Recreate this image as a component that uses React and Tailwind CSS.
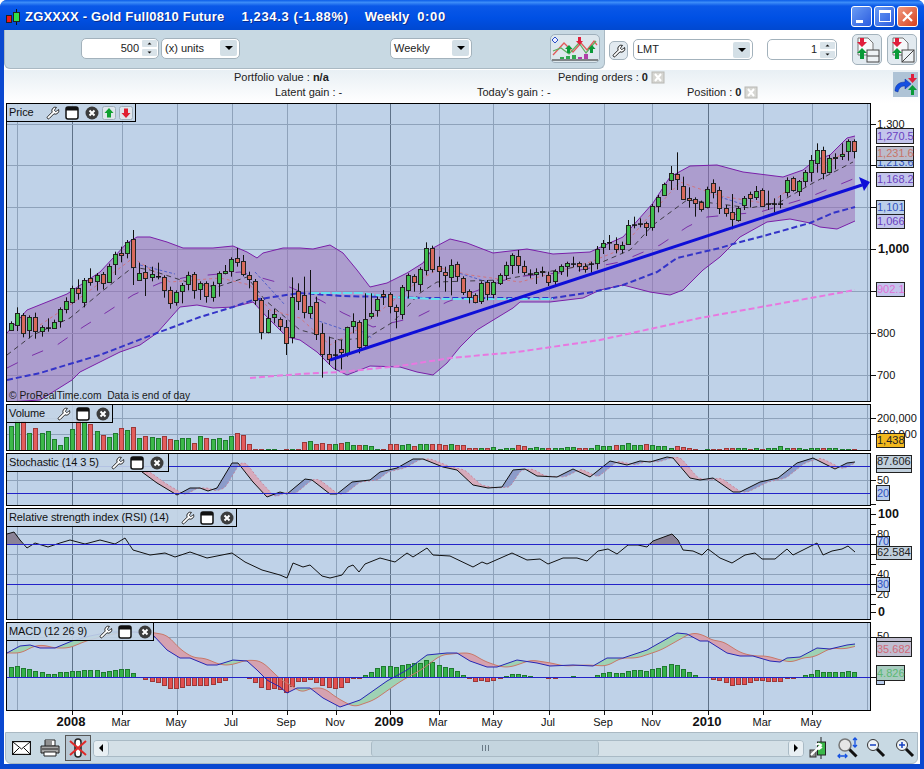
import React from 'react';
import { Wrench } from 'lucide-react';

const seg = (ox, oy, rows) => rows.map(([x, t, b, c, wt, wb]) => ({
    x: ox + x / 3, top: oy + t / 3, bot: oy + b / 3, c,
    wt: wt === undefined ? null : oy + wt / 3,
    wb: wb === undefined ? null : oy + wb / 3,
}));

// candle bodies read off the chart, split in four stretches
const candles = [
    ...seg(0, 220, [[34,310,330,'g'],[52,280,315,'g',262],[70,285,340,'r'],[88,292,330,'g',undefined,355],[106,292,335,'r',278],[127,322,335,'g'],[145,322,326,'d',295],[163,305,322,'g'],[181,268,305,'g'],[199,243,268,'g',232],[217,203,245,'g'],[235,203,218,'r',178],[253,180,245,'g',undefined,262],[271,175,188,'r',145],[292,165,182,'g',undefined,212],[310,162,190,'r'],[328,137,185,'g',undefined,165],[346,103,133,'g',95,165],[364,100,106,'r',80],[382,67,100,'g',60],[400,57,142,'r',30,195],[418,160,180,'g',128],[436,157,175,'r',135,228],[457,163,172,'g',140],[475,168,172,'d',128],[493,172,212,'r'],[511,210,250,'r',200,266],[529,217,248,'g'],[547,195,214,'g',undefined,250],[565,165,193,'g',155],[583,162,210,'r',undefined,236],[601,190,208,'g',undefined,240],[619,190,230,'r',undefined,248],[640,195,230,'g',185],[658,160,190,'g',undefined,230],[676,153,160,'g',135],[694,118,155,'g',undefined,170],[712,115,128,'r',84],[730,124,163,'r',105],[748,165,178,'r',155,205],[766,183,240,'r'],[784,240,337,'r',undefined,358],[805,295,337,'g',270],[823,283,292,'g',266],[841,298,320,'r'],[859,320,367,'r',300,405],[877,232,353,'g',172,370],[895,214,245,'r',190,270]]),
    ...seg(300, 230, [[13,195,247,'r',140,265],[31,227,247,'g',120,265],[49,217,313,'r',200,330],[67,310,373,'r',280,443],[88,373,388,'r',320,405],[106,373,376,'d',330,420],[124,358,368,'r',330,418],[142,292,370,'g',290,380],[160,274,290,'g',250,310],[178,277,352,'r',undefined,370],[196,268,347,'g',190,350],[214,250,260,'g',190],[232,208,241,'g',200,260],[250,193,200,'r',180,225],[271,193,230,'r',undefined,250],[289,230,241,'r',undefined,295],[307,172,254,'g',165,268],[325,136,182,'g',undefined,205],[343,139,157,'r',undefined,185],[361,118,163,'g',undefined,185],[379,55,121,'g',37],[397,55,118,'r',47],[418,109,124,'r',80,172],[436,126,136,'r',110,185],[454,106,142,'g',88,196],[472,103,139,'r',95,155],[490,145,187,'r',undefined,195],[508,184,202,'r',undefined,220],[526,196,217,'r',undefined,220],[544,160,214,'g',undefined,222],[562,157,193,'r',150],[580,157,193,'g'],[601,136,161,'g',undefined,165],[619,105,136,'g',95,150],[637,76,105,'g',70,132],[655,79,106,'r',60,130],[673,109,127,'r',92,135],[691,130,133,'d',118,145],[709,127,133,'g',115,162],[727,123,127,'g',110,140],[745,136,157,'r',125,168],[766,124,154,'g',118,165],[784,109,124,'g',103,135],[802,100,109,'g',95,140],[820,100,100,'d',80,112],[838,100,109,'r',95,125],[856,109,118,'r',100,128],[874,100,103,'d',95,128],[892,57,100,'g',48,118]]),
    ...seg(590, 140, [[40,310,322,'g',300,342],[58,306,308,'d',285,330],[79,313,329,'r',292,340],[97,316,329,'g',305,340],[115,256,313,'g',240,315],[133,253,255,'d',230,265],[151,250,253,'d',235,262],[169,250,262,'r',245,288],[187,199,262,'g',192,272],[205,172,199,'g',165],[223,133,166,'g',128,168],[244,100,121,'g',78,150],[262,103,118,'r',37,150],[280,139,178,'r',110,180],[298,175,182,'r',142,203],[316,178,190,'r',172,230],[334,187,208,'r',182,215],[352,148,202,'g',140,205],[370,130,157,'r',118,175],[388,150,205,'r',140,222]]),
    ...seg(700, 120, [[79,265,280,'r',255,290],[97,277,298,'r',222,328],[115,265,302,'g',260,305],[133,235,255,'g',228,270],[151,223,235,'r',215,262],[169,213,232,'g',198,240],[187,210,257,'r',205,260],[205,250,252,'d',212,270],[223,250,252,'d',235,278],[241,250,252,'d',225,265],[262,180,217,'g',172,230],[280,175,210,'r',170,215],[298,183,212,'g',180,228],[316,157,185,'g',150,200],[334,121,157,'g',105,185],[352,91,130,'g',70,158],[370,91,160,'r',80,178],[388,115,157,'g',105,160],[406,110,114,'g',100,148],[427,103,109,'g',70,120],[445,64,94,'g',58,122],[463,64,95,'r',58,115]]),
];

const volumes = [25,31,30,18,23,18,20,12,6,14,22,32,32,27,20,16,14,18,23,21,24,13,15,14,13,15,12,11,13,13,8,15,13,12,13,11,15,18,16,7,2,2,2,2,1,2,2,2,9,10,7,8,7,7,8,9,6,6,6,5,2,2,7,7,6,7,5,7,7,7,7,6,7,6,6,3,3,3,3,4,2,3,3,6,5,3,4,3,3,3,3,4,4,3,3,3,6,5,5,6,6,8,6,6,7,6,5,5,3,5,4,3,2,1,2,2,2,3,3,3,3,2,3,2,3,3,5,3,3,3,2,3,3,3,3,3,2,2,2,1];

const macdBars = [30,33,28,25,18,15,10,10,14,15,18,19,21,21,22,16,18,22,23,25,12,1,-6,-12,-15,-25,-33,-33,-30,-25,-23,-23,-25,-22,-16,-10,0,1,0,-3,-15,-30,-37,-33,-37,-45,-28,-13,-12,-5,-15,-25,-30,-32,-30,-15,-3,-3,6,15,27,33,33,30,36,40,42,43,52,45,35,30,26,18,7,-2,-12,-10,-12,-10,-2,4,9,9,6,2,0,0,-3,-3,0,0,2,0,0,0,6,12,15,12,12,18,21,21,18,24,27,33,39,36,25,15,6,0,0,-5,-10,-15,-25,-22,-20,-15,-10,-10,-13,-13,-13,-3,-3,0,6,9,21,15,15,15,15,18,15];

const upperBand = [[7,333],[27,310],[67,294],[100,272],[127,243],[137,237],[150,237],[167,242],[183,248],[213,248],[233,246],[247,252],[257,258],[263,253],[283,248],[300,248],[313,249],[330,245],[343,253],[357,270],[370,287],[387,283],[407,273],[423,263],[433,248],[450,239],[467,243],[493,253],[527,249],[553,254],[590,252],[603,246],[623,237],[653,203],[670,177],[690,166],[717,165],[743,172],[783,177],[803,170],[815,160],[830,155],[847,138],[855,136]];
const lowerBand = [[7,402],[40,400],[72,380],[80,372],[120,352],[140,345],[157,333],[180,307],[197,305],[213,308],[233,307],[253,302],[267,317],[287,337],[300,340],[317,352],[333,368],[347,375],[370,366],[400,367],[417,372],[433,375],[447,363],[460,347],[477,330],[490,322],[513,308],[520,302],[550,302],[583,298],[600,290],[623,285],[650,292],[670,295],[683,290],[703,270],[720,257],[740,237],[767,222],[790,219],[810,223],[820,227],[837,229],[855,221]];
const longAverage = [[7,380],[40,373],[73,363],[100,355],[157,333],[200,317],[233,307],[253,300],[280,296],[300,293],[343,296],[427,298],[500,298],[553,298],[593,292],[623,285],[657,272],[677,258],[720,248],[733,244],[767,235],[810,223],[833,213],[855,207]];
const cyanAverage = [[310,293],[360,293],[393,297],[433,299],[487,299],[553,299]];
const pinkAverage = [[250,378],[300,374],[340,372],[400,366],[450,358],[517,352],[600,340],[700,318],[855,290]];
const midAverage = [[7,355],[33,335],[70,318],[100,293],[133,267],[150,270],[190,283],[217,287],[247,277],[265,300],[300,330],[340,340],[367,338],[393,322],[420,293],[437,282],[500,280],[540,273],[600,263],[630,250],[653,225],[687,200],[720,204],[750,208],[780,202],[813,183],[853,162]];
const lowAverage = [[7,368],[33,355],[57,345],[83,327],[107,312],[133,295],[160,283],[187,277],[240,272],[280,283],[320,300],[343,313],[373,327],[417,317],[447,302],[513,277],[570,272],[620,262],[660,245],[687,227],[707,217],[760,212],[807,198],[853,179]];
const redAverage = [[40,325],[70,305],[100,283],[133,258],[170,282],[220,278],[250,285],[270,310],[300,318],[330,345],[360,328],[390,303],[420,280],[440,268],[470,275],[520,282],[550,274],[590,262],[620,250],[650,215],[680,182],[720,196],[770,204],[813,170],[850,150]];
const blueSnips = [[[140,265],[175,274]], [[255,272],[285,305]], [[455,272],[488,282]], [[310,318],[345,330]], [[352,325],[372,338]], [[720,197],[745,205]]];

const stochastic = [[142,472],[157,483],[177,495],[190,488],[200,488],[208,491],[217,488],[232,463],[238,463],[253,482],[267,497],[280,492],[287,494],[305,479],[312,480],[330,494],[337,494],[352,482],[370,480],[380,472],[397,468],[413,459],[423,459],[443,467],[457,470],[473,485],[488,488],[502,487],[513,470],[525,469],[537,476],[557,477],[573,469],[590,477],[610,461],[627,465],[640,461],[650,462],[667,457],[673,458],[690,478],[700,480],[713,478],[733,492],[740,492],[760,482],[778,478],[797,463],[813,458],[827,465],[835,469],[847,463],[855,462]];
const rsi = [[7,534],[14,532],[20,540],[27,548],[35,543],[48,547],[60,543],[70,540],[85,544],[100,540],[115,544],[125,538],[133,550],[150,555],[165,553],[175,557],[190,552],[207,558],[232,553],[245,562],[262,570],[280,575],[287,578],[293,563],[303,567],[310,565],[322,576],[330,578],[342,575],[348,567],[353,565],[359,572],[365,564],[380,558],[395,562],[407,553],[413,557],[427,548],[433,555],[450,556],[473,567],[482,562],[487,564],[512,553],[527,560],[540,559],[548,564],[563,558],[577,558],[587,561],[598,551],[608,549],[617,554],[628,545],[638,545],[647,547],[653,541],[672,534],[678,540],[683,550],[693,551],[702,555],[708,549],[720,558],[732,563],[745,555],[755,553],[762,559],[775,559],[787,549],[793,555],[817,543],[823,555],[832,551],[842,549],[848,546],[855,552]];
const macd = [[7,653],[20,646],[30,645],[40,648],[55,648],[72,641],[90,636],[110,632],[135,632],[153,635],[167,650],[180,658],[190,658],[207,665],[217,665],[233,660],[247,661],[257,670],[267,680],[280,687],[287,693],[297,688],[310,688],[323,698],[340,707],[360,700],[387,681],[407,670],[427,655],[447,653],[457,653],[470,661],[487,667],[497,667],[517,660],[537,663],[550,666],[573,665],[593,666],[607,658],[623,658],[647,650],[677,633],[687,634],[700,641],[708,641],[727,653],[740,656],[753,656],[770,661],[780,662],[787,658],[800,657],[817,648],[830,649],[847,645],[855,644]];

const verticals = [17, 72, 122, 177, 232, 287, 336, 390, 439, 493, 549, 604, 652, 708, 763, 812, 867];
const yearLines = [72, 390, 708];

const toPoints = (pts) => pts.map((p) => p.join(',')).join(' ');

const valueAt = (pts, x) => {
    if (x <= pts[0][0]) return pts[0][1];
    for (let i = 1; i < pts.length; i++) {
        if (x <= pts[i][0]) {
            const [x0, y0] = pts[i - 1];
            const [x1, y1] = pts[i];
            return y0 + ((y1 - y0) * (x - x0)) / (x1 - x0);
        }
    }
    return pts[pts.length - 1][1];
};

// slow line: lagged and smoothed copy of the fast one
const lagged = (pts, lag, span) => {
    const out = [];
    for (let x = pts[0][0]; x <= pts[pts.length - 1][0]; x += 2) {
        let sum = 0;
        for (let k = 0; k < span; k++) sum += valueAt(pts, x - lag - k * 2);
        out.push([x, sum / span]);
    }
    return out;
};

// filled area between two lines, one polygon for each run of the same sign
const Cloud = ({ fast, slow, above, below, opacity = 1 }) => {
    const runs = [];
    let run = null;
    for (const [x, s] of slow) {
        const f = valueAt(fast, x);
        const up = f < s;
        if (!run || run.up !== up) {
            run = { up, a: run ? [run.a[run.a.length - 1]] : [], b: run ? [run.b[run.b.length - 1]] : [] };
            runs.push(run);
        }
        run.a.push([x, f]);
        run.b.push([x, s]);
    }
    return runs.map((r, i) => (
        <polygon key={i} points={toPoints([...r.a, ...[...r.b].reverse()])} fill={r.up ? above : below} opacity={opacity} />
    ));
};

const Grid = ({ top, height, rows }) => (
    <>
        {verticals.map((x) => (
            <line key={x} x1={x + 0.5} x2={x + 0.5} y1={top} y2={top + height} stroke={yearLines.includes(x) ? '#5f7288' : '#8ea2ba'} />
        ))}
        {rows.map((y) => (
            <line key={y} x1={7} x2={870} y1={y + 0.5} y2={y + 0.5} stroke="#8ea2ba" />
        ))}
    </>
);

const WindowIcon = () => (
    <svg width="14" height="14" viewBox="0 0 14 14">
        <rect x="1" y="1" width="12" height="12" rx="2" fill="#fff" stroke="#111" strokeWidth="1.5" />
        <rect x="1" y="1" width="12" height="3.5" fill="#111" />
    </svg>
);

const CloseIcon = () => (
    <svg width="14" height="14" viewBox="0 0 14 14">
        <circle cx="7" cy="7" r="6.5" fill="#3c3c3c" />
        <path d="M4.5 4.5l5 5M9.5 4.5l-5 5" stroke="#fff" strokeWidth="2" />
    </svg>
);

const MoveIcon = ({ up }) => (
    <svg width="14" height="14" viewBox="0 0 14 14">
        <rect x="0.5" y="0.5" width="13" height="13" rx="2" fill="#dfe6ec" stroke="#9fb0bc" />
        {up
            ? <path d="M7 2l4.5 5H9v4.5H5V7H2.5z" fill="#10a030" />
            : <path d="M7 12L2.5 7H5V2.5h4V7h2.5z" fill="#e02030" />}
    </svg>
);

const Legend = ({ title, box, moves }) => (
    <div className={`absolute left-0 top-0 flex items-center border-r border-b border-black bg-[#c3d4e6]/90 pl-[2px] text-[11px] tracking-[-0.1px] text-[#111] ${box}`}>
        <span className="whitespace-nowrap">{title}</span>
        <span className="ml-[12px] flex"><Wrench size={14} strokeWidth={1.5} fill="#fff" /></span>
        <span className="ml-[5px] flex"><WindowIcon /></span>
        <span className="ml-[6px] flex"><CloseIcon /></span>
        {moves && <span className="ml-[3px] flex gap-[3px]"><MoveIcon up /><MoveIcon /></span>}
    </div>
);

const Tag = ({ x = 876, y, w, h, fill, color, children, textY }) => (
    <g>
        <rect x={x + 0.5} y={y + 0.5} width={w} height={h} fill={fill} stroke="#222" />
        {children && <text x={x + 1} y={textY ?? y + h - 3} fontSize="11" fill={color}>{children}</text>}
    </g>
);

const AxisText = ({ y, bold, children }) => (
    <text x={bold ? 878 : 877} y={y + 4} fontSize={bold ? 12.5 : 11} fontWeight={bold ? 700 : 400} fill="#111">{children}</text>
);

const Ticks = ({ rows }) => rows.map((y) => <line key={y} x1={871} x2={876} y1={y + 0.5} y2={y + 0.5} stroke="#111" />);

// one chart row: plot with a black frame, price axis beside it
const Pane = ({ top, height, frame, legend, rows, axis, children }) => (
    <div className={`flex ${frame}`}>
        <div className="relative w-[865px] border border-black bg-[#bfd2e8]">
            <svg width="863" height={height - 2} viewBox={`7 ${top + 1} 863 ${height - 2}`} className="block">
                <Grid top={top} height={height} rows={rows} />
                {children}
            </svg>
            {legend}
        </div>
        <svg width="49" height={height} viewBox={`871 ${top} 49 ${height}`} className="block overflow-visible">
            {axis}
        </svg>
    </div>
);

const PriceChart = () => (
    <>
        <polygon points={toPoints([...upperBand, ...[...lowerBand].reverse()])} fill="#9a68b4" opacity="0.5" />
        <polyline points={toPoints(upperBand)} fill="none" stroke="#7a1fa8" />
        <polyline points={toPoints(lowerBand)} fill="none" stroke="#7a1fa8" />
        <polyline points={toPoints(redAverage)} fill="none" stroke="#d86a6a" strokeDasharray="3 3" strokeWidth="0.8" />
        {blueSnips.map((s, i) => (
            <polyline key={i} points={toPoints(s)} fill="none" stroke="#3a50c8" strokeDasharray="3 2" strokeWidth="0.8" />
        ))}
        <polyline points={toPoints(midAverage)} fill="none" stroke="#222" strokeDasharray="5 4" strokeWidth="0.8" />
        <polyline points={toPoints(lowAverage)} fill="none" stroke="#7a2fa8" strokeDasharray="12 16" />
        <polyline points={toPoints(pinkAverage)} fill="none" stroke="#e878e0" strokeWidth="2" strokeDasharray="6 3" />
        <polyline points={toPoints(longAverage)} fill="none" stroke="#3434c8" strokeWidth="2" strokeDasharray="6 3" />
        <polyline points={toPoints(cyanAverage)} fill="none" stroke="#66e0f0" strokeWidth="2" strokeDasharray="9 2" />
        {candles.map((c, i) => {
            const x = Math.round(c.x);
            const hi = c.wt ?? c.top - 2 - ((i * 7) % 7);
            const lo = c.wb ?? c.bot + 1 + ((i * 5) % 7);
            return (
                <g key={i}>
                    <line x1={x + 0.5} x2={x + 0.5} y1={hi} y2={lo} stroke="#111" />
                    {c.c === 'd'
                        ? <rect x={x - 2} y={c.top} width="5" height="1.5" fill="#111" />
                        : <rect x={x - 1.5} y={Math.round(c.top) + 0.5} width="4" height={Math.max(1, Math.round(c.bot - c.top))} fill={c.c === 'g' ? '#3fbe4c' : '#d86a5c'} stroke="#222" />}
                </g>
            );
        })}
        <line x1="330" y1="360" x2="862" y2="185" stroke="#0e0ed8" strokeWidth="3" />
        <polygon points="870,182 859,177 864,191" fill="#0e0ed8" />
        <text x="9" y="399" fontSize="10.3" fill="#1a1a1a">{'© ProRealTime.com\u00a0 Data is end of day'}</text>
    </>
);

const PriceAxis = () => (
    <>
        <Ticks rows={[124, 165, 207, 249, 291, 333, 375]} />
        <AxisText y={124}>1,300</AxisText>
        <Tag y={128} w={37} h={15} fill="#c3c5ec" color="#6a3fc0">1,270.5</Tag>
        <Tag y={158} w={37} h={9} fill="#b9cfe8" color="#3050b8" textY={166}>1,213.6</Tag>
        <Tag y={146} w={37} h={14} fill="#bcbccb" color="#c87468">1,231.6</Tag>
        <Tag y={172} w={37} h={14} fill="#c3c5ec" color="#6a3fc0">1,168.2</Tag>
        <Tag y={200} w={28} h={14} fill="#bcd0ea" color="#3050c0">1,101</Tag>
        <Tag y={214} w={28} h={14} fill="#c3c5ec" color="#6a3fc0">1,066</Tag>
        <AxisText y={249} bold>1,000</AxisText>
        <Tag y={282} w={28} h={14} fill="#c3c5ec" color="#e070d8">902.1</Tag>
        <AxisText y={333}>800</AxisText>
        <AxisText y={375}>700</AxisText>
    </>
);

const VolumeChart = () => candles.map((c, i) => {
    const h = volumes[i] ?? 2;
    const red = c.c === 'r';
    return (
        <rect key={i} x={Math.round(c.x) - 1.5} y={451 - h + 0.5} width="4" height={h} fill={red ? '#e35d5d' : '#3cb84a'} stroke={red ? '#9c3838' : '#1f7a30'} />
    );
});

const VolumeAxis = () => (
    <>
        <Ticks rows={[418, 434]} />
        <AxisText y={418}>200,000</AxisText>
        <AxisText y={434}>100,000</AxisText>
        <Tag y={433} w={28} h={14} fill="#f2b81e" color="#222">1,438</Tag>
    </>
);

const stochasticSlow = lagged(stochastic, 6, 3);

const StochasticChart = () => (
    <>
        <Cloud fast={stochastic} slow={stochasticSlow} above="#8c9cca" below="#d6aabb" />
        <polyline points={toPoints(stochasticSlow)} fill="none" stroke="#c87890" strokeWidth="0.8" strokeDasharray="2 2" />
        <polyline points={toPoints(stochastic)} fill="none" stroke="#111" />
        <line x1="7" x2="870" y1="466.5" y2="466.5" stroke="#2222c8" />
        <line x1="7" x2="870" y1="493.5" y2="493.5" stroke="#2222c8" />
    </>
);

const StochasticAxis = () => (
    <>
        <Ticks rows={[480, 504]} />
        <Tag y={466} w={35} h={6} fill="#c0cfdc" />
        <Tag y={455} w={35} h={13} fill="#c0cfdc" color="#222">87.606</Tag>
        <AxisText y={480}>50</AxisText>
        <Tag y={485} w={13} h={15} fill="#b8ccec" color="#3050c0">20</Tag>
    </>
);

const RsiChart = () => (
    <>
        <polygon points="7,544 7,534 14,532 20,540 23,544" fill="#8a8296" />
        <polygon points="648,544 653,541 672,534 678,540 680,544" fill="#8a8296" />
        <polyline points={toPoints(rsi)} fill="none" stroke="#111" />
        <line x1="7" x2="870" y1="544.5" y2="544.5" stroke="#2222c8" />
        <line x1="7" x2="870" y1="584.5" y2="584.5" stroke="#2222c8" />
    </>
);

const RsiAxis = () => (
    <>
        <Ticks rows={[514, 524, 534, 544, 554, 564, 574, 584, 594, 604, 612]} />
        <AxisText y={514} bold>100</AxisText>
        <AxisText y={534}>80</AxisText>
        <Tag y={536} w={13} h={12} fill="#b8ccec" color="#3050c0">70</Tag>
        <Tag y={546} w={35} h={13} fill="#c0cfdc" color="#222">62.584</Tag>
        <AxisText y={574}>40</AxisText>
        <AxisText y={594}>20</AxisText>
        <Tag y={577} w={13} h={14} fill="#b8ccec" color="#3050c0">30</Tag>
        <AxisText y={612} bold>0</AxisText>
    </>
);

const macdSlow = lagged(macd, 9, 6);

const MacdChart = () => (
    <>
        <Cloud fast={macd} slow={macdSlow} above="#9ed2b4" below="#d5a2b0" />
        {candles.map((c, i) => {
            const v = (macdBars[i] ?? 0) / 3;
            if (Math.abs(v) < 0.5) return null;
            return (
                <rect key={i} x={Math.round(c.x) - 1.5} y={Math.round(v > 0 ? 677 - v : 677) + 0.5} width="4" height={Math.round(Math.abs(v))} fill={v > 0 ? '#36b24a' : '#e2504f'} stroke={v > 0 ? '#1f7a30' : '#9c3838'} />
            );
        })}
        <polyline points={toPoints(macdSlow)} fill="none" stroke="#c87868" />
        <polyline points={toPoints(macd)} fill="none" stroke="#2626b4" />
        <line x1="7" x2="870" y1="677.5" y2="677.5" stroke="#2222c8" />
    </>
);

const MacdAxis = () => (
    <>
        <Ticks rows={[637, 677]} />
        <AxisText y={636}>50</AxisText>
        <Tag y={637} w={35} h={4} fill="#c0bed0" />
        <Tag y={641} w={35} h={15} fill="#c0bed0" color="#d06a78">35.682</Tag>
        <Tag y={680} w={8} h={4} fill="#b8ccec" />
        <Tag y={665} w={28} h={15} fill="#a8ccc0" color="#5cb874">4.826</Tag>
    </>
);

const timeLabels = [
    [72, '2008', true], [122, 'Mar'], [177, 'May'], [232, 'Jul'], [287, 'Sep'], [336, 'Nov'],
    [390, '2009', true], [439, 'Mar'], [493, 'May'], [549, 'Jul'], [604, 'Sep'], [652, 'Nov'],
    [708, '2010', true], [763, 'Mar'], [812, 'May'],
];

const TimeAxis = () => (
    <svg width="916" height="21" viewBox="4 711 916 21" className="block shrink-0">
        {timeLabels.map(([x, label, bold]) => (
            <g key={x}>
                <line x1={x + 0.5} x2={x + 0.5} y1="711" y2="715" stroke="#111" />
                <text x={x - 1} y="726" textAnchor="middle" fontSize={bold ? 13 : 11} fontWeight={bold ? 700 : 400} fill="#111">{label}</text>
            </g>
        ))}
    </svg>
);

const DropArrow = () => (
    <span className="flex h-[16px] w-[17px] items-center justify-center rounded-[2px] bg-[#d3dfe6]">
        <span className="h-0 w-0 border-x-[4px] border-t-[4px] border-x-transparent border-t-black" />
    </span>
);

const Select = ({ label, width }) => (
    <div className={`flex h-[21px] shrink-0 items-center justify-between rounded-[5px] border border-[#a3b2bc] bg-white pl-[3px] pr-[2px] text-[11px] text-[#222] ${width}`}>
        <span>{label}</span>
        <DropArrow />
    </div>
);

const Spin = ({ value, width }) => (
    <div className={`flex h-[21px] shrink-0 items-center justify-end rounded-[5px] border border-[#a3b2bc] bg-white pr-[1px] text-[11px] text-[#222] ${width}`}>
        <span className="mr-[3px]">{value}</span>
        <svg width="15" height="16" viewBox="0 0 15 16">
            <rect width="15" height="7" rx="1" fill="#d9e3e9" />
            <rect y="9" width="15" height="7" rx="1" fill="#d9e3e9" />
            <path d="M5.5 4.5L7.5 2.5 9.5 4.5zM5.5 11.5L7.5 13.5 9.5 11.5z" fill="#111" />
        </svg>
    </div>
);

const ChartButton = () => (
    <div className="ml-[78px] flex h-[29px] w-[50px] shrink-0 items-center justify-center rounded-[5px] border border-[#9fb0bc] bg-[#dde7ed]">
        <svg width="46" height="25" viewBox="0 0 46 25">
            <rect x="0" y="20" width="46" height="4" fill="#dbe6ec" />
            <path d="M1 19L12 7l9 9 8-9 6 7 7-9 3 4" fill="none" stroke="#e05a5a" strokeWidth="1.3" />
            <path d="M1 15L9 12l8 6 10-11 7 10 10-12" fill="none" stroke="#5fae60" strokeWidth="1.3" />
            <path d="M3 1l3 3-3 3-3-3z" fill="#eef" stroke="#2a50c8" />
            <path d="M26 1h3v4h2l-3.500 4-3.500-4h2z" fill="#e01e3c" />
            <path d="M17 9l3.500 4H18v4h-3v-4h-2zM40 9l3.500 4H41v4h-3v-4h-2z" fill="#0a9a38" />
            <path d="M8 21h4v2H8zM14 20h4v3h-4zM20 19h4v4h-4z" fill="#30a850" />
            <path d="M26 21h4v2h-4zM32 18h4v5h-4z" fill="#b040a8" />
            <path d="M0 24h46" stroke="#222" />
        </svg>
    </div>
);

const OrderButton = ({ split }) => (
    <div className="flex h-[31px] w-[30px] shrink-0 items-center justify-center rounded-[5px] border border-[#a3b2bc] bg-[#e2eaf0]">
        <svg width="26" height="26" viewBox="0 0 26 26">
            <path d="M4 1h10l5 5v12H4z" fill="#f6f8fa" stroke="#777" />
            <path d="M6 1h4v4h3l-5 5-5-5h3z" fill="#e01e3c" />
            <path d="M8 11l5 5h-3v6H6v-6H3z" fill="#0a9a38" />
            {split
                ? <><rect x="13" y="13" width="12" height="12" fill="#eef2f5" stroke="#444" /><path d="M13 25L25 13" stroke="#444" /></>
                : <><rect x="13" y="13" width="12" height="12" fill="#eef2f5" stroke="#444" /><path d="M13 19h12" stroke="#444" /></>}
        </svg>
    </div>
);

const CancelChip = () => (
    <svg width="14" height="13" viewBox="0 0 14 13" className="ml-[3px]">
        <rect x="1" y="1" width="12" height="11" fill="#d6d6d2" stroke="#b8b8b4" />
        <path d="M4 3l6 7M10 3l-6 7" stroke="#fff" strokeWidth="2" />
    </svg>
);

const SwapIcon = () => (
    <div className="flex h-[25px] w-[25px] items-center justify-center bg-[#aec3d6]">
        <svg width="25" height="25" viewBox="0 0 25 25">
            <path d="M2 19c0-6 4-9 10-9V7l6 5-6 5v-3c-3 0-6 1-7 6z" fill="#1450e0" stroke="#0a2c9c" strokeWidth="0.5" />
            <path d="M18 2h3v4h3l-4.500 5L15 6h3z" fill="#e01e3c" />
            <path d="M19.500 13L24 18h-3v5h-3v-5h-3z" fill="#0a9a38" />
        </svg>
    </div>
);

const TitleButton = ({ children, className }) => (
    <div className={`flex h-[21px] w-[21px] items-center justify-center rounded-[3px] border border-white ${className}`}>
        {children}
    </div>
);

const TitleBar = () => (
    <div className="flex h-[30px] shrink-0 items-center bg-[linear-gradient(#0a5ce8_0%,#3c8cf8_8%,#0a58e8_20%,#0050e4_60%,#0048d0_100%)] pl-[6px] pr-[6px] text-[13px] font-bold text-white [text-shadow:1px_1px_0_#0a2c90]">
        <svg width="15" height="16" viewBox="0 0 15 16" className="mt-[3px] shrink-0">
            <rect x="0.500" y="6.500" width="5" height="7" fill="#f01818" stroke="#222" />
            <path d="M10.500 0v16" stroke="#111" />
            <rect x="7.500" y="3.500" width="6" height="9" fill="#30e048" stroke="#222" />
        </svg>
        <span className="ml-[4px] mt-[3px] whitespace-nowrap tracking-[0.2px]">ZGXXXX - Gold Full0810 Future</span>
        <span className="ml-[17px] mt-[3px] whitespace-nowrap tracking-[0.65px]">1,234.3 (-1.88%)</span>
        <span className="ml-[16px] mt-[3px] whitespace-nowrap">Weekly</span>
        <span className="ml-[8px] mt-[3px] whitespace-nowrap tracking-[0.65px]">0:00</span>
        <div className="ml-auto mt-[2px] flex gap-[2px] [text-shadow:none]">
            <TitleButton className="bg-[linear-gradient(135deg,#6a9cf4,#2a5ce0)]">
                <span className="mt-[10px] mr-[5px] h-[3px] w-[7px] bg-white" />
            </TitleButton>
            <TitleButton className="bg-[linear-gradient(135deg,#6a9cf4,#2a5ce0)]">
                <span className="h-[12px] w-[12px] border border-t-[3px] border-white" />
            </TitleButton>
            <TitleButton className="bg-[linear-gradient(135deg,#f09a80,#d8401c)]">
                <svg width="13" height="13" viewBox="0 0 13 13"><path d="M2 2l9 9M11 2l-9 9" stroke="#fff" strokeWidth="2.200" /></svg>
            </TitleButton>
        </div>
    </div>
);

const Toolbar = () => (
    <div className="flex h-[40px] shrink-0 items-start">
        <div className="flex h-[39px] w-[601px] shrink-0 items-center rounded-b-[6px] border-b border-r border-l border-[#aab9c3] bg-[#c8d9e3] pb-[2px] pl-[76px]">
            <Spin value="500" width="w-[78px]" />
            <div className="ml-[2px]"><Select label="(x) units" width="w-[79px]" /></div>
            <div className="ml-[150px]"><Select label="Weekly" width="w-[82px]" /></div>
            <ChartButton />
        </div>
        <div className="ml-[4px] mt-[11px] flex h-[19px] w-[19px] shrink-0 items-center justify-center rounded-[5px] border border-[#a3b2bc] bg-[#e2eaf0]">
            <Wrench size={14} strokeWidth={1.5} fill="#fff" />
        </div>
        <div className="ml-[5px] mt-[9px]"><Select label="LMT" width="w-[120px]" /></div>
        <div className="ml-[14px] mt-[9px]"><Spin value="1" width="w-[70px]" /></div>
        <div className="ml-[15px] mt-[4px]"><OrderButton /></div>
        <div className="ml-[5px] mt-[4px]"><OrderButton split /></div>
    </div>
);

const InfoRows = () => (
    <div className="relative h-[33px] shrink-0 bg-[linear-gradient(#e8eff4,#ffffff)] text-[11px] text-[#222]">
        <div className="flex h-[15px] items-center pl-[230px]">
            <span className="w-[324px] whitespace-nowrap">Portfolio value : <b>n/a</b></span>
            <span className="flex items-center whitespace-nowrap">Pending orders : <b className="ml-[3px]">0</b><CancelChip /></span>
        </div>
        <div className="flex h-[15px] items-center pl-[271px]">
            <span className="w-[202px] whitespace-nowrap">Latent gain : -</span>
            <span className="w-[210px] whitespace-nowrap">Today's gain : -</span>
            <span className="flex items-center whitespace-nowrap">Position : <b className="ml-[3px]">0</b><CancelChip /></span>
        </div>
        <div className="absolute right-[2px] top-[2px]"><SwapIcon /></div>
    </div>
);

const BottomBar = () => (
    <div className="ml-[1px] flex h-[32px] w-[913px] shrink-0 items-center rounded-b-[6px] border border-[#aab9c3] bg-[#c8d9e3]">
        <svg width="19" height="14" viewBox="0 0 19 14" className="ml-[6px]">
            <rect x="0.500" y="0.500" width="18" height="13" fill="#fff" stroke="#111" strokeWidth="1.300" />
            <path d="M1 1l8.500 7L18 1M1 13l6-6M18 13l-6-6" fill="none" stroke="#111" />
        </svg>
        <svg width="20" height="18" viewBox="0 0 20 18" className="ml-[9px]">
            <path d="M5 1h10v6H5z" fill="#fff" stroke="#222" />
            <path d="M1 7h18v7H1z" fill="#a8a8a8" stroke="#222" />
            <path d="M4 13h12v4H4z" fill="#fff" stroke="#222" />
            <path d="M2 10h16M5 3h7M5 5h7" stroke="#222" />
        </svg>
        <div className="ml-[5px] flex h-[26px] w-[26px] items-center justify-center border border-[#555] bg-[#b8c8d4]">
            <svg width="18" height="20" viewBox="0 0 18 20">
                <rect x="6" y="1" width="6" height="18" rx="3" fill="#fff" stroke="#222" strokeWidth="1.500" />
                <path d="M6 10h6" stroke="#222" />
                <path d="M1 3l16 14M17 3L1 17" stroke="#e02828" strokeWidth="2" />
            </svg>
        </div>
        <div className="ml-[2px] flex h-[17px] w-[711px] items-center rounded-[4px] border border-[#a9bac5] bg-[#d4e0e7]">
            <div className="flex h-[15px] w-[15px] items-center justify-center rounded-[3px] border-r border-[#a9bac5] bg-[#e8eff3]">
                <span className="h-0 w-0 border-y-[4px] border-r-[4px] border-y-transparent border-r-black" />
            </div>
            <div className="ml-[262px] flex h-[15px] w-[228px] items-center justify-center rounded-[3px] border-x border-[#a9bac5] bg-[#c4d5df] text-[9px] text-[#555]">
                <span className="h-[6px] w-[7px] border-x border-[#6a7a86] bg-[linear-gradient(90deg,transparent_2px,#6a7a86_2px,#6a7a86_3px,transparent_3px)]" />
            </div>
            <div className="ml-auto flex h-[15px] w-[15px] items-center justify-center rounded-[3px] border-l border-[#a9bac5] bg-[#e8eff3]">
                <span className="h-0 w-0 border-y-[4px] border-l-[4px] border-y-transparent border-l-black" />
            </div>
        </div>
        <svg width="18" height="22" viewBox="0 0 18 22" className="ml-[5px]">
            <path d="M12 0v22" stroke="#222" />
            <rect x="8.500" y="5" width="8" height="13" fill="#3cb84a" stroke="#222" />
            <rect x="1" y="13" width="6" height="7" fill="#8a8a8a" stroke="#333" />
            <path d="M2 18l7-7M7 8c2-2 4-1 5 0l-3 3 1 1 3-2" fill="none" stroke="#fff" strokeWidth="2" />
        </svg>
        <svg width="22" height="22" viewBox="0 0 22 22" className="ml-[10px]">
            <circle cx="8" cy="8" r="6" fill="#e6e6e6" stroke="#777" strokeWidth="1.500" />
            <path d="M12.500 12.500l7 7" stroke="#111" strokeWidth="3" />
            <path d="M18 1v9M16 3l2-2 2 2M16 8l2 2 2-2M1 19h9M3 17l-2 2 2 2M8 17l2 2-2 2" fill="none" stroke="#1450e0" strokeWidth="1.300" />
        </svg>
        <svg width="20" height="20" viewBox="0 0 20 20" className="ml-[7px]">
            <circle cx="7" cy="7" r="5.500" fill="#eef3f7" stroke="#333" />
            <path d="M4 7h6" stroke="#1440c0" strokeWidth="1.500" />
            <path d="M11 11l7 7" stroke="#111" strokeWidth="3" />
        </svg>
        <svg width="20" height="20" viewBox="0 0 20 20" className="ml-[9px]">
            <circle cx="7" cy="7" r="5.500" fill="#eef3f7" stroke="#333" />
            <path d="M4 7h6M7 4v6" stroke="#1440c0" strokeWidth="1.500" />
            <path d="M11 11l7 7" stroke="#111" strokeWidth="3" />
        </svg>
    </div>
);

const App = () => (
    <div className="flex h-[769px] w-[924px] flex-col overflow-hidden rounded-t-[7px] bg-[#0a48d0] font-['Liberation_Sans',Arial,sans-serif]">
        <TitleBar />
        <div className="mx-[4px] flex h-[734px] shrink-0 flex-col bg-white">
            <Toolbar />
            <InfoRows />
            <div className="ml-[2px] flex flex-col gap-[2px]">
                <Pane top={103} height={299} frame="h-[299px]" rows={[124, 165, 207, 249, 291, 333, 375]} axis={<PriceAxis />}
                    legend={<Legend title="Price" box="h-[18px] w-[129px]" moves />}>
                    <PriceChart />
                </Pane>
                <Pane top={404} height={47} frame="h-[47px]" rows={[418, 434]} axis={<VolumeAxis />}
                    legend={<Legend title="Volume" box="h-[18px] w-[106px]" />}>
                    <VolumeChart />
                </Pane>
                <Pane top={453} height={53} frame="h-[53px]" rows={[480]} axis={<StochasticAxis />}
                    legend={<Legend title="Stochastic (14 3 5)" box="h-[18px] w-[162px]" />}>
                    <StochasticChart />
                </Pane>
                <Pane top={508} height={112} frame="h-[112px]" rows={[534, 554, 574, 594]} axis={<RsiAxis />}
                    legend={<Legend title="Relative strength index (RSI) (14)" box="h-[18px] w-[230px]" />}>
                    <RsiChart />
                </Pane>
                <Pane top={622} height={89} frame="h-[89px]" rows={[637]} axis={<MacdAxis />}
                    legend={<Legend title="MACD (12 26 9)" box="h-[18px] w-[147px]" />}>
                    <MacdChart />
                </Pane>
            </div>
            <TimeAxis />
            <BottomBar />
        </div>
    </div>
);

export default App;
